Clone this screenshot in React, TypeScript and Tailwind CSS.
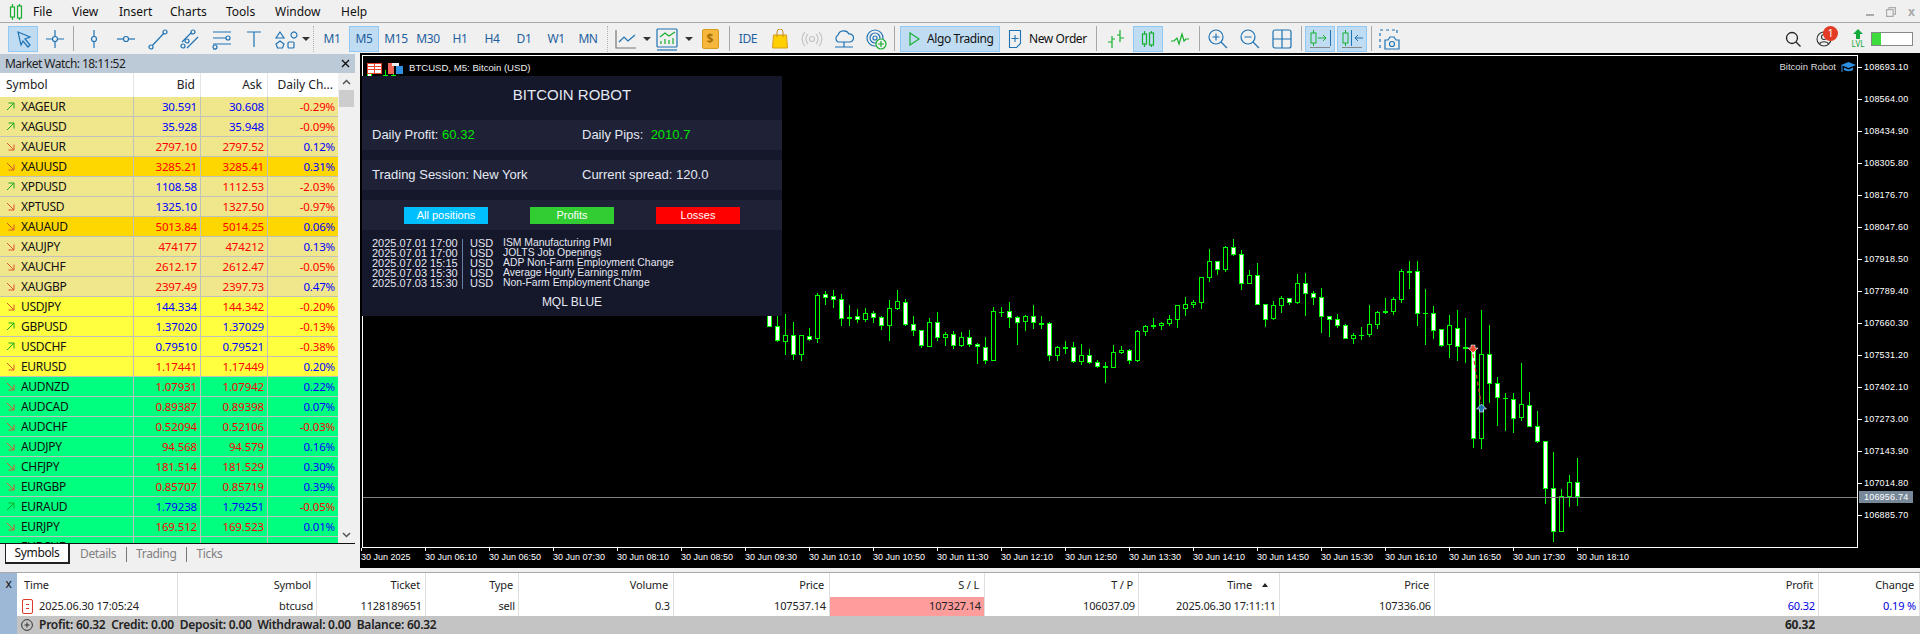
import React from "react";

const BLUE = "#1f73b4";
const GREEN = "#17b02e";
type Row = [string, 0 | 1, string, "b" | "r", string, "b" | "r", string, string];
const K = "bg-[#f0e68c]", G = "bg-[#ffd700]", Y = "bg-[#ffff40]", S = "bg-[#00ff7f]";
const rows: Row[] = [
  ["XAGEUR", 1, "30.591", "b", "30.608", "b", "-0.29%", K],
  ["XAGUSD", 1, "35.928", "b", "35.948", "b", "-0.09%", K],
  ["XAUEUR", 0, "2797.10", "r", "2797.52", "r", "0.12%", K],
  ["XAUUSD", 0, "3285.21", "r", "3285.41", "r", "0.31%", G],
  ["XPDUSD", 1, "1108.58", "b", "1112.53", "r", "-2.03%", K],
  ["XPTUSD", 0, "1325.10", "b", "1327.50", "r", "-0.97%", K],
  ["XAUAUD", 0, "5013.84", "r", "5014.25", "r", "0.06%", G],
  ["XAUJPY", 0, "474177", "r", "474212", "r", "0.13%", K],
  ["XAUCHF", 0, "2612.17", "r", "2612.47", "r", "-0.05%", K],
  ["XAUGBP", 0, "2397.49", "r", "2397.73", "r", "0.47%", K],
  ["USDJPY", 0, "144.334", "b", "144.342", "r", "-0.20%", Y],
  ["GBPUSD", 1, "1.37020", "b", "1.37029", "b", "-0.13%", Y],
  ["USDCHF", 1, "0.79510", "b", "0.79521", "b", "-0.38%", Y],
  ["EURUSD", 0, "1.17441", "r", "1.17449", "r", "0.20%", Y],
  ["AUDNZD", 0, "1.07931", "r", "1.07942", "r", "0.22%", S],
  ["AUDCAD", 0, "0.89387", "r", "0.89398", "r", "0.07%", S],
  ["AUDCHF", 0, "0.52094", "r", "0.52106", "r", "-0.03%", S],
  ["AUDJPY", 0, "94.568", "r", "94.579", "r", "0.16%", S],
  ["CHFJPY", 0, "181.514", "r", "181.529", "r", "0.30%", S],
  ["EURGBP", 0, "0.85707", "r", "0.85719", "r", "0.39%", S],
  ["EURAUD", 1, "1.79238", "b", "1.79251", "b", "-0.05%", S],
  ["EURJPY", 0, "169.512", "r", "169.523", "r", "0.01%", S],
  ["EURCHF", 0, "0.93366", "r", "0.93384", "r", "-0.18%", S],
];

// wickTop, bodyTop, bodyBottom, wickBottom, kind (1 filled, 0 hollow, 2 thick doji, 3 thin doji), in zoom units
type C = [number, number, number, number, number];
const upper: C[] = [
  [100, 100, 290, 290, 1], [258, 288, 332, 335, 1], [252, 316, 335, 375, 0], [276, 316, 374, 390, 1], [314, 316, 374, 393, 0],
  [294, 319, 329, 333, 1], [189, 195, 326, 339, 0], [183, 193, 203, 225, 1], [180, 198, 209, 234, 1], [192, 208, 266, 288, 1],
  [225, 260, 263, 288, 2], [237, 259, 269, 279, 1], [234, 250, 269, 276, 0], [243, 250, 263, 279, 1], [258, 262, 287, 300, 1],
  [210, 235, 287, 333, 0], [180, 214, 236, 240, 0], [207, 217, 284, 288, 1], [258, 283, 302, 318, 1], [300, 301, 347, 354, 1],
  [264, 277, 350, 351, 0], [246, 277, 323, 333, 1], [306, 313, 323, 348, 0], [303, 313, 347, 357, 1], [306, 322, 347, 351, 0],
  [300, 322, 344, 351, 1], [339, 343, 350, 402, 1], [321, 352, 392, 402, 1], [231, 244, 392, 392, 0], [231, 247, 248, 261, 3],
  [216, 244, 263, 294, 1], [258, 262, 278, 345, 1], [255, 259, 275, 303, 0], [225, 259, 278, 297, 1], [258, 278, 281, 297, 2],
  [276, 280, 377, 393, 1], [348, 352, 377, 393, 0], [333, 352, 355, 372, 2], [336, 352, 395, 399, 1], [342, 376, 395, 405, 0],
  [357, 376, 398, 402, 1], [390, 397, 410, 414, 1], [396, 409, 412, 459, 2], [345, 367, 413, 414, 0], [348, 361, 368, 372, 0],
  [357, 361, 392, 402, 1], [300, 304, 392, 396, 0], [285, 289, 305, 318, 0], [264, 286, 289, 297, 2],
  [276, 280, 287, 300, 0], [255, 268, 281, 288, 0], [225, 226, 269, 294, 0], [201, 223, 236, 258, 0], [210, 217, 224, 234, 0],
  [141, 142, 218, 237, 0], [57, 94, 143, 156, 0], [93, 94, 119, 135, 1], [48, 52, 119, 126, 0], [27, 52, 74, 78, 1],
  [60, 73, 161, 180, 1], [120, 136, 161, 162, 0], [99, 136, 224, 225, 1], [222, 223, 269, 291, 1], [213, 226, 266, 270, 0],
  [198, 205, 227, 249, 0], [204, 205, 218, 225, 1], [132, 160, 218, 222, 0], [129, 160, 191, 258, 1], [183, 190, 203, 225, 1],
  [174, 202, 260, 309, 1], [258, 259, 269, 321, 1], [252, 268, 287, 294, 1], [282, 286, 326, 327, 1], [309, 316, 326, 342, 0],
  [291, 316, 317, 330, 3], [225, 283, 314, 321, 0], [243, 247, 284, 297, 0], [204, 244, 247, 252, 2], [201, 208, 245, 255, 0],
  [117, 124, 209, 219, 0], [93, 124, 127, 177, 2], [93, 124, 251, 288, 1], [177, 250, 251, 345, 3], [228, 250, 302, 327, 1],
];
// continues from x = 1441, in the y scale 340 + v / 3
const lower: C[] = [
  [-32, -32, 18, 20, 1], [-75, -45, 14, 54, 0], [-90, -36, 22, 63, 1], [-66, 22, 28, 69, 1], [22, 30, 296, 324, 1],
  [-90, 42, 296, 327, 0], [-45, 42, 131, 189, 1], [111, 130, 173, 258, 1], [159, 175, 176, 273, 3], [159, 178, 236, 279, 1],
  [69, 193, 233, 243, 0], [156, 196, 260, 261, 1], [213, 259, 305, 309, 1], [304, 304, 446, 492, 1], [336, 445, 575, 606, 1],
  [447, 469, 575, 576, 0], [405, 427, 472, 501, 0], [354, 427, 472, 498, 1],
];

function Candle({ x, d, yf }: { x: number; d: C; yf: (v: number) => number }) {
  const [wt, bt, bb, wb, k] = d;
  const a = yf(wt), b = yf(bt), c = yf(bb), e = yf(wb);
  return (
    <g shapeRendering="crispEdges">
      <line x1={x + 0.5} x2={x + 0.5} y1={a} y2={e} stroke="#00ff00" />
      {k < 2 ? (
        <rect x={x - 1.5} y={b + 0.5} width={4} height={Math.max(c - b - 1, 1)} fill={k === 1 ? "#fff" : "#000"} stroke="#00ff00" />
      ) : (
        <rect x={x - 2} y={b} width={5} height={k === 2 ? 2 : 1} fill="#00ff00" />
      )}
    </g>
  );
}

const prices = ["108693.10", "108564.00", "108434.90", "108305.80", "108176.70", "108047.60", "107918.50", "107789.40", "107660.30", "107531.20", "107402.10", "107273.00", "107143.90", "107014.80", "106885.70"];
const times = ["06:10", "06:50", "07:30", "08:10", "08:50", "09:30", "10:10", "10:50", "11:30", "12:10", "12:50", "13:30", "14:10", "14:50", "15:30", "16:10", "16:50", "17:30", "18:10"];
const news = [
  ["2025.07.01 17:00", "ISM Manufacturing PMI"],
  ["2025.07.01 17:00", "JOLTS Job Openings"],
  ["2025.07.02 15:15", "ADP Non-Farm Employment Change"],
  ["2025.07.03 15:30", "Average Hourly Earnings m/m"],
  ["2025.07.03 15:30", "Non-Farm Employment Change"],
];

function Ic({ children, w = 24, h = 24 }: { children: React.ReactNode; w?: number; h?: number }) {
  return <svg width={w} height={h} viewBox={`0 0 ${w} ${h}`} fill="none" stroke={BLUE} strokeWidth="1.2">{children}</svg>;
}
function Cell({ w = 32, on, children }: { w?: number; on?: boolean; children?: React.ReactNode }) {
  return (
    <div className="flex h-full shrink-0 items-center justify-center py-[2px]" style={{ width: w }}>
      <div className={`flex h-[26px] w-[30px] items-center justify-center border ${on ? "border-[#90c8f6] bg-[#bfdcf2]" : "border-transparent"}`}>{children}</div>
    </div>
  );
}
const Sep = ({ w = 6 }: { w?: number }) => (
  <div className="flex h-full shrink-0 items-center justify-center" style={{ width: w }}>
    <div className="h-[25px] w-px bg-[#a8a8a8]" />
  </div>
);
const Grip = () => (
  <div className="flex h-full w-[6px] shrink-0 items-center justify-center">
    <div className="h-[26px] w-px border-l border-dotted border-[#b0b0b0]" />
  </div>
);
const Caret = () => <div className="h-0 w-0 shrink-0 border-x-[4px] border-t-[4px] border-x-transparent border-t-[#333]" />;
const TF = ({ t, on }: { t: string; on?: boolean }) => (
  <Cell on={on}><span className="text-[12px] tracking-[-0.4px] text-[#1f5f9e]">{t}</span></Cell>
);
const CandleIcon = ({ color = GREEN }: { color?: string }) => (
  <svg width="16" height="18" viewBox="0 0 16 18" fill="none" stroke={color} strokeWidth="1.2">
    <path d="M4.5 1v3M4.5 14v3M11.5 1v2M11.5 15v2" />
    <rect x="2.5" y="4" width="4" height="10" /><rect x="9.5" y="3" width="4" height="12" />
  </svg>
);

function Toolbar() {
  return (
    <div className="flex h-[30px] shrink-0 items-center pl-[7px] pt-[1px]">
      <Cell on><Ic><path d="M7 5l12 5-5 2 5 6-2 2-5-6-2 4z" /></Ic></Cell>
      <Cell><Ic><path d="M12 3v18M3 12h18" /><circle cx="12" cy="12" r="2.5" fill="#f0f0f0" /></Ic></Cell>
      <div className="flex h-full w-[7px] shrink-0 items-center"><div className="ml-[2px] h-[25px] w-px bg-[#a8a8a8]" /></div>
      <Cell><Ic><path d="M12 3v18" /><circle cx="12" cy="12" r="2.5" fill="#f0f0f0" /></Ic></Cell>
      <Cell><Ic><path d="M3 12h18" /><circle cx="12" cy="12" r="2.5" fill="#f0f0f0" /></Ic></Cell>
      <Cell><Ic><path d="M5 20L19 5" /><circle cx="5" cy="20" r="2" fill="#f0f0f0" /><circle cx="19" cy="5" r="2" fill="#f0f0f0" /></Ic></Cell>
      <Cell><Ic><path d="M4 15L15 4M9 21L20 10" /><circle cx="5" cy="19" r="2" fill="#f0f0f0" /><circle cx="15" cy="5" r="2" fill="#f0f0f0" /><circle cx="9" cy="14" r="2" fill="#f0f0f0" /></Ic></Cell>
      <Cell><Ic><path d="M3 5h18M3 11h14M3 17h18M3 22h3" /><circle cx="18" cy="11" r="2" fill="#f0f0f0" /><circle cx="5" cy="20" r="2" fill="#f0f0f0" /></Ic></Cell>
      <Cell><Ic><path d="M5 5h14M12 5v15" /></Ic></Cell>
      <div className="flex h-full w-[40px] shrink-0 items-center pl-[4px]">
        <Ic><path d="M6 5l4 6H2zM17 8a3 3 0 1 0 0-.01M6 14l4 3-1.5 4h-5L2 17z" /><rect x="14" y="15" width="6" height="6" rx="1" /></Ic>
        <div className="ml-[4px]"><Caret /></div>
      </div>
      <Grip />
      <TF t="M1" /><TF t="M5" on /><TF t="M15" /><TF t="M30" /><TF t="H1" /><TF t="H4" /><TF t="D1" /><TF t="W1" /><TF t="MN" />
      <Grip />
      <div className="flex h-full w-[41px] shrink-0 items-center pl-[4px]">
        <Ic><path d="M2 3v18h20" stroke="#777" /><path d="M5 15l5-5 4 4 7-6" /></Ic>
        <div className="ml-[5px]"><Caret /></div>
      </div>
      <div className="flex h-full w-[43px] shrink-0 items-center pl-[4px]">
        <Ic><rect x="2" y="2" width="20" height="18" rx="1" /><path d="M2 23h20" /><path d="M5 10l5-4 4 3 6-4" stroke={GREEN} /><path d="M6 17v-3M10 17v-5M14 17v-4M18 17v-6" stroke={GREEN} /></Ic>
        <div className="ml-[6px]"><Caret /></div>
      </div>
      <Cell><div className="flex h-[20px] w-[17px] items-center justify-center rounded-[2px] border border-[#d79c1c] bg-[#f6b73c] text-[12px] font-bold text-[#a86f06]">$</div></Cell>
      <Sep />
      <Cell><span className="text-[12px] tracking-[-0.4px] text-[#1f5f9e]">IDE</span></Cell>
      <Cell><svg width="16" height="20" viewBox="0 0 16 20"><path d="M1.5 6h13l1 13H.5z" fill="#ffd000" stroke="#d79c1c" /><path d="M5 8V3a3 3 0 0 1 6 0v5" fill="none" stroke="#c98a1c" /></svg></Cell>
      <Cell><Ic><circle cx="12" cy="12" r="2.5" stroke="#c4c4c4" /><path d="M8 7a7 7 0 0 0 0 10M16 7a7 7 0 0 1 0 10M5 5a10 10 0 0 0 0 14M19 5a10 10 0 0 1 0 14" stroke="#c4c4c4" /></Ic></Cell>
      <Cell><Ic><path d="M6 15a4 4 0 0 1 0-7 6 6 0 0 1 11-1 4 4 0 0 1 1 8z" /><path d="M12 15v5M3 20h18" /></Ic></Cell>
      <Cell><Ic><circle cx="11" cy="11" r="8" /><circle cx="11" cy="11" r="5" /><circle cx="11" cy="11" r="2" /><circle cx="17" cy="17" r="5" fill="#f0f0f0" stroke={GREEN} /><path d="M17 14v6M14 17h6" stroke={GREEN} /></Ic></Cell>
      <div className="flex h-full w-[8px] shrink-0 items-center"><div className="ml-[2px] h-[25px] w-px bg-[#a8a8a8]" /></div>
      <div className="flex h-[26px] w-[100px] shrink-0 items-center border border-[#90c8f6] bg-[#bfdcf2] pl-[8px]">
        <svg width="11" height="14" viewBox="0 0 11 14" fill="none" stroke={GREEN} strokeWidth="1.2"><path d="M1 1l9 6-9 6z" /></svg>
        <span className="ml-[7px] text-[12px] tracking-[-0.4px] text-[#111]">Algo Trading</span>
      </div>
      <div className="flex h-[26px] w-[92px] shrink-0 items-center pl-[8px]">
        <svg width="14" height="20" viewBox="0 0 14 20" fill="none" stroke={BLUE} strokeWidth="1.1"><path d="M1.5 1.5h11v13l-4 4h-7z" /><path d="M7 6v7M3.500 9.500h7" /></svg>
        <span className="ml-[7px] text-[12px] tracking-[-0.4px] text-[#111]">New Order</span>
      </div>
      <Sep w={8} />
      <Cell><svg width="18" height="20" viewBox="0 0 18 20" fill="none" stroke={GREEN} strokeWidth="1.2"><path d="M5 7v12M1 13h4M5 10h3M13 1v12M10 6h3M13 9h4" /></svg></Cell>
      <Cell on><CandleIcon /></Cell>
      <Cell><svg width="18" height="14" viewBox="0 0 18 14" fill="none" stroke={GREEN} strokeWidth="1.2"><path d="M0 9h3l3-3 2 6 3-10 2 7 2-2h3" /></svg></Cell>
      <Sep />
      <Cell><Ic><circle cx="10" cy="10" r="7" /><path d="M15 15l6 6M10 6.500v7M6.500 10h7" /></Ic></Cell>
      <Cell><Ic><circle cx="10" cy="10" r="7" /><path d="M15 15l6 6M6.500 10h7" /></Ic></Cell>
      <Cell><Ic><rect x="3" y="3" width="18" height="18" rx="2" /><path d="M12 3v18M3 12h18" /></Ic></Cell>
      <Sep />
      <Cell on><div className="flex flex-col items-center"><div className="flex items-center gap-[1px]"><svg width="7" height="16" viewBox="0 0 7 16" fill="none" stroke={GREEN}><path d="M3.500 0v3M3.500 13v3" /><rect x="1" y="3" width="5" height="10" /></svg><svg width="9" height="8" viewBox="0 0 9 8" fill="none" stroke={GREEN}><path d="M0 4h8M5 1l3 3-3 3" /></svg><div className="ml-[2px] h-[16px] w-px bg-[#1f73b4]" /></div><div className="mt-[1px] h-px w-[20px] bg-[#888]" /></div></Cell>
      <Cell on><div className="flex flex-col items-center"><div className="flex items-center gap-[1px]"><svg width="7" height="16" viewBox="0 0 7 16" fill="none" stroke={GREEN}><path d="M3.500 0v3M3.500 13v3" /><rect x="1" y="3" width="5" height="10" /></svg><div className="mx-[1px] h-[16px] w-px bg-[#1f73b4]" /><svg width="9" height="8" viewBox="0 0 9 8" fill="none" stroke={BLUE}><path d="M9 4H1M4 1L1 4l3 3" /></svg></div><div className="mt-[1px] h-px w-[20px] bg-[#888]" /></div></Cell>
      <Sep />
      <Cell><Ic><path d="M2 3h3M8 3h3M14 3h3M2 6v3M2 12v3M2 18v3M19 3v3" /><path d="M7 22V13h3l2-3h4l2 3h3v9z" /><circle cx="14" cy="17" r="2.500" /></Ic></Cell>
      <div className="ml-auto flex h-full items-center pr-[7px]">
        <svg width="16" height="16" viewBox="0 0 16 16" fill="none" stroke="#222" strokeWidth="1.3" className="mr-[15px]"><circle cx="7" cy="7" r="5.500" /><path d="M11 11l4.500 4.500" /></svg>
        <div className="relative mr-[19px] h-[16px] w-[16px]">
          <svg width="16" height="16" viewBox="0 0 16 16" fill="none" stroke="#333" strokeWidth="1.100"><circle cx="8" cy="8" r="7" /><circle cx="8" cy="6" r="2.500" /><path d="M3.500 13c1-3 8-3 9 0" /></svg>
          <span className="absolute left-[7px] top-[-5px] flex h-[15px] w-[15px] items-center justify-center rounded-full bg-[#e33b25] text-[10px] leading-none text-white">1</span>
        </div>
        <div className="mr-[6px] flex w-[14px] flex-col items-center">
          <svg width="10" height="10" viewBox="0 0 10 10" fill="#12a83a"><path d="M5 0l5 5H7v5H3V5H0z" /></svg>
          <span className="text-[8px] leading-[9px] text-[#12a83a]">LVL</span>
        </div>
        <div className="flex h-[14px] w-[42px] border border-[#888] bg-white"><div className="h-full w-[9px] bg-[#3ddc3d]" /></div>
      </div>
    </div>
  );
}

function Trend({ up }: { up: boolean }) {
  return (
    <svg width="9" height="9" viewBox="0 0 9 9" fill="none" stroke={up ? "#16a81e" : "#d9532c"} strokeWidth="1">
      {up ? <path d="M1 8l7-7M2.500 1H8v5.500" /> : <path d="M1 1l7 7M2.500 8H8V2.500" />}
    </svg>
  );
}

function MarketWatch() {
  const col = (c: string) => (c === "b" ? "text-[#0000ff]" : "text-[#ff0000]");
  return (
    <div className="flex w-[360px] shrink-0 flex-col pr-[5px] pt-px">
      <div className="flex h-[19px] shrink-0 items-center justify-between bg-[#bccad8] pl-[5px] pr-[5px] text-[12px] tracking-[-0.55px] text-[#222]">
        <span>Market Watch: 18:11:52</span>
        <svg width="9" height="9" viewBox="0 0 9 9" stroke="#111" strokeWidth="1.400"><path d="M1 1l7 7M8 1l-7 7" /></svg>
      </div>
      <div className="flex h-[470px] shrink-0 bg-white">
        <div className="w-[338px] overflow-hidden">
          <div className="grid h-[24px] grid-cols-[134px_67px_67px_70px] items-center text-[12px] text-[#222]">
            <div className="flex h-full items-center border-r border-[#e4e4e4] pl-[6px]">Symbol</div>
            <div className="flex h-full items-center justify-end border-r border-[#e4e4e4] pr-[5px]">Bid</div>
            <div className="flex h-full items-center justify-end border-r border-[#e4e4e4] pr-[5px]">Ask</div>
            <div className="flex h-full items-center justify-end pr-[5px]">Daily Ch...</div>
          </div>
          {rows.map((r) => (
            <div key={r[0]} className={`grid h-[20px] grid-cols-[134px_67px_67px_70px] border-b border-[#c0c0c0] text-[11.5px] leading-[19px] tracking-[-0.15px] ${r[7]}`}>
              <div className="flex items-center border-r border-[#c0c0c0] pl-[6px] text-[#111]">
                <Trend up={r[1] === 1} /><span className="ml-[6px] text-[12px] tracking-[-0.3px]">{r[0]}</span>
              </div>
              <div className={`border-r border-[#c0c0c0] pr-[3px] text-right ${col(r[3])}`}>{r[2]}</div>
              <div className={`border-r border-[#c0c0c0] pr-[3px] text-right ${col(r[5])}`}>{r[4]}</div>
              <div className={`pr-[3px] text-right ${r[6][0] === "-" ? "text-[#ff0000]" : "text-[#0000ff]"}`}>{r[6]}</div>
            </div>
          ))}
        </div>
        <div className="flex w-[17px] flex-col items-center bg-[#f0f0f0] pb-[5px] pt-[6px]">
          <svg width="9" height="6" viewBox="0 0 9 6" fill="none" stroke="#555" strokeWidth="1.500"><path d="M1 5l3.500-3.500L8 5" /></svg>
          <div className="mt-[5px] h-[17px] w-[15px] bg-[#cdcdcd]" />
          <svg className="mt-auto" width="9" height="6" viewBox="0 0 9 6" fill="none" stroke="#555" strokeWidth="1.500"><path d="M1 1l3.500 3.500L8 1" /></svg>
        </div>
      </div>
      <div className="flex h-[26px] items-start border-t border-[#111] pl-[5px] text-[12px] tracking-[-0.35px] text-[#808080]">
        <div className="flex h-[20px] w-[65px] items-center justify-center border-b-2 border-l border-r-2 border-[#222] bg-white text-[#111]">Symbols</div>
        <span className="ml-[10px] mt-[1px]">Details</span>
        <span className="ml-[10px] mt-[3px] h-[15px] w-px bg-[#777]" />
        <span className="ml-[9px] mt-[1px]">Trading</span>
        <span className="ml-[10px] mt-[3px] h-[15px] w-px bg-[#777]" />
        <span className="ml-[9px] mt-[1px]">Ticks</span>
      </div>
    </div>
  );
}

function Chart() {
  const L = "font-['Liberation_Sans',sans-serif]";
  const y1 = (v: number) => 230 + v / 3;
  const y2 = (v: number) => 340 + v / 3;
  return (
    <div className={`relative h-[515px] flex-1 bg-black text-white ${L}`}>
      <svg className="absolute inset-0" width="1560" height="515" viewBox="360 53 1560 515">
        <g shapeRendering="crispEdges" stroke="#fff" fill="none">
          <path d="M362.500 55.500H1857.500V547.500H362.500Z" />
          {prices.map((_, i) => <line key={i} x1="1858" x2="1862" y1={Math.round(67 + i * 32) + 0.5} y2={Math.round(67 + i * 32) + 0.5} />)}
          {[...Array(20).keys()].map((i) => <line key={i} x1={361 + i * 64 + 0.5} x2={361 + i * 64 + 0.5} y1="548" y2="551" />)}
        </g>
        <g>
          {[369, 385, 393].map((x, i) => <Candle key={x} x={x} d={[70, i ? 75 : 70, 90, 90, i ? 0 : 1]} yf={(v) => v} />)}
          {upper.map((d, i) => <Candle key={i} x={769 + i * 8} d={d} yf={(v) => Math.round(y1(v))} />)}
          {lower.map((d, i) => <Candle key={i} x={1441 + i * 8} d={d} yf={(v) => Math.round(y2(v))} />)}
        </g>
        <line x1="363" x2="1857" y1="497.500" y2="497.500" stroke="#808080" shapeRendering="crispEdges" />
        <path d="M1473 354L1481 403" stroke="#e0402a" strokeWidth="1.200" strokeDasharray="4 3" />
        <path d="M1471 345h4v3h3l-5 5-5-5h3z" fill="#e8452c" stroke="#fff" strokeWidth="0.600" />
        <path d="M1481.500 404l5 5h-3v3h-4v-3h-3z" fill="#1f73b4" stroke="#fff" strokeWidth="0.600" />
      </svg>
      <div className="absolute left-[7px] top-[9px] flex items-center">
        <svg width="15" height="11" viewBox="0 0 15 11" fill="#fff" stroke="#e8452c"><rect x="0.500" y="0.500" width="14" height="10" /><path d="M0 3.500h7M0 6.500h7M8 3.500h7M8 6.500h7M7.500 0v11" stroke="#e8452c" /></svg>
        <svg className="ml-[6px]" width="15" height="11" viewBox="0 0 15 11"><path d="M0 0h6v11H0z" fill="#f0685a" /><path d="M8 3h7v8H8z" fill="#2f8fe0" /><path d="M4 0h7v3H4z" fill="#eee" /></svg>
        <span className="ml-[6px] text-[9.6px] leading-[12px] text-[#eee]">BTCUSD, M5: Bitcoin (USD)</span>
      </div>
      <div className="absolute right-[64px] top-[8px] flex items-center">
        <span className="text-[9.5px] leading-[12px] text-[#ddd]">Bitcoin Robot</span>
        <svg className="ml-[5px]" width="15" height="12" viewBox="0 0 15 12" fill="#2f8fe0"><path d="M7.500 1L15 4 7.500 7 0 4z" /><path d="M3 6.500V9c2 1.500 7 1.500 9 0V6.500L7.500 8.500z" /><path d="M1 4v7" stroke="#2f8fe0" /></svg>
      </div>
      <div className="absolute left-[2px] top-[23px] h-[240px] w-[420px] bg-[#15172a] text-[#e4e8f2]">
        <div className="flex h-[44px] items-start justify-center pt-[10px] text-[15px] leading-[18px]">BITCOIN ROBOT</div>
        <div className="flex h-[30px] items-center bg-[#1f2236] pl-[10px] text-[13px]">
          <span className="w-[210px]">Daily Profit: <span className="text-[#00e600]">60.32</span></span>
          <span>Daily Pips:&nbsp; <span className="text-[#00e600]">2010.7</span></span>
        </div>
        <div className="mt-[10px] flex h-[30px] items-center bg-[#1f2236] pl-[10px] text-[13px]">
          <span className="w-[210px]">Trading Session: New York</span>
          <span>Current spread: 120.0</span>
        </div>
        <div className="mt-[10px] flex h-[30px] items-center justify-center gap-[42px] bg-[#1f2236] text-[11px] text-white">
          <div className="flex h-[17px] w-[84px] items-center justify-center bg-[#00bfff]">All positions</div>
          <div className="flex h-[17px] w-[84px] items-center justify-center bg-[#32cd32]">Profits</div>
          <div className="flex h-[17px] w-[84px] items-center justify-center bg-[#ff0000]">Losses</div>
        </div>
        <div className="relative mt-[8px] pl-[10px] text-[11px] leading-[10px]">
          <div className="absolute left-[100px] top-px h-[50px] w-px bg-[#6a7fa8]" />
          {news.map((n, i) => (
            <div key={i} className="flex h-[10px]">
              <span className="w-[98px]">{n[0]}</span>
              <span className="w-[33px]">USD</span>
              <span className="text-[10.4px]">{n[1]}</span>
            </div>
          ))}
        </div>
        <div className="mt-[7px] text-center text-[12px] leading-[14px]">MQL BLUE</div>
      </div>
      {prices.map((p, i) => (
        <span key={p} className="absolute left-[1504px] text-[9px] leading-[12px] tracking-[0.2px]" style={{ top: 67 + i * 32 - 53 - 6 }}>{p}</span>
      ))}
      <span className="absolute left-[1499px] top-[438px] bg-[#778899] px-[5px] text-[9px] leading-[12px] tracking-[0.2px] text-white">106956.74</span>
      <span className="absolute left-[1px] top-[498px] text-[9px] leading-[12px]">30 Jun 2025</span>
      {times.map((t, i) => (
        <span key={t} className="absolute top-[498px] text-[9px] leading-[12px]" style={{ left: 65 + i * 64 }}>30 Jun {t}</span>
      ))}
    </div>
  );
}

function Bottom() {
  const cols: [number, string, string, string?][] = [
    [161, "Time", "2025.06.30 17:05:24"],
    [139, "Symbol", "btcusd"],
    [109, "Ticket", "1128189651"],
    [93, "Type", "sell"],
    [155, "Volume", "0.3"],
    [156, "Price", "107537.14"],
    [155, "S / L", "107327.14", "bg-[#ff9c9c]"],
    [154, "T / P", "106037.09"],
    [141, "Time", "2025.06.30 17:11:11"],
    [155, "Price", "107336.06"],
    [384, "Profit", "60.32", "text-[#0000e0]"],
    [101, "Change", "0.19 %", "text-[#0000e0]"],
  ];
  return (
    <div className="mt-[4px] flex h-[62px] shrink-0 border-t border-[#a8a8a8] bg-white text-[11px] tracking-[-0.15px] text-[#222]">
      <div className="w-[17px] shrink-0 bg-[#9db8d6] pt-[4px] text-center text-[12px] leading-[14px] text-[#111]">x</div>
      <div className="flex flex-1 flex-col">
        <div className="flex h-[24px]">
          {cols.map((c, i) => (
            <div key={i} className={`flex shrink-0 items-center border-r border-[#e0e0e0] pr-[5px] ${i === 0 ? "pl-[7px]" : "justify-end"} ${i === 8 ? "gap-[10px]" : ""}`} style={{ width: c[0] }}>
              <span>{c[1]}</span>
              {i === 8 && <span className="mr-[6px] h-0 w-0 border-x-[3px] border-b-[4px] border-x-transparent border-b-[#222]" />}
            </div>
          ))}
        </div>
        <div className="flex h-[19px]">
          {cols.map((c, i) => (
            <div key={i} className={`flex shrink-0 items-center border-r border-[#e0e0e0] pr-[3px] ${i === 0 ? "pl-[5px]" : "justify-end"} ${c[3] ?? ""}`} style={{ width: c[0] }}>
              {i === 0 && (
                <svg className="mr-[6px]" width="11" height="15" viewBox="0 0 11 15" fill="none" stroke="#e0392b"><rect x="0.500" y="0.500" width="10" height="14" rx="1.500" /><path d="M4 5.500h3M4 9.500h3" /></svg>
              )}
              <span>{c[2]}</span>
            </div>
          ))}
        </div>
        <div className="relative flex h-[18px] items-center bg-[#c4c4c4] pl-[4px] font-semibold">
          <svg className="mr-[6px]" width="12" height="12" viewBox="0 0 12 12" fill="none" stroke="#333"><circle cx="6" cy="6" r="5.400" /><path d="M3.500 6h5M6 3.500v5" /></svg>
          <span className="text-[12px] tracking-[-0.25px]">Profit: 60.32&nbsp;&nbsp;Credit: 0.00&nbsp;&nbsp;Deposit: 0.00&nbsp;&nbsp;Withdrawal: 0.00&nbsp;&nbsp;Balance: 60.32</span>
          <span className="absolute right-[105px] text-[12px] font-bold">60.32</span>
        </div>
      </div>
    </div>
  );
}

export default function App() {
  return (
    <div className="flex h-[634px] w-[1920px] flex-col overflow-hidden bg-[#f0f0f0] font-['Noto_Sans',sans-serif]">
      <div className="flex h-[23px] shrink-0 items-center border-b border-[#a8a8a8] pt-[2px] text-[12px] text-[#111]">
        <div className="ml-[8px] flex h-[18px] w-[25px] items-center"><CandleIcon /></div>
        {[["File", 39], ["View", 47], ["Insert", 51], ["Charts", 56], ["Tools", 49], ["Window", 66], ["Help", 40]].map(([t, w]) => (
          <span key={t as string} style={{ width: w as number }}>{t}</span>
        ))}
        <div className="ml-auto flex items-center gap-[12px] pr-[5px] text-[#aaa]">
          <div className="mt-[6px] h-[2px] w-[8px] bg-[#aaa]" />
          <svg width="10" height="10" viewBox="0 0 10 10" fill="none" stroke="#aaa" strokeWidth="1.200"><rect x="0.600" y="2.600" width="6.500" height="6.800" /><path d="M3 2.500V.6h6.400v6.600H7" /></svg>
          <span className="text-[12px] font-bold leading-none">x</span>
        </div>
      </div>
      <Toolbar />
      <div className="flex h-[515px] shrink-0">
        <MarketWatch />
        <Chart />
      </div>
      <Bottom />
    </div>
  );
}
